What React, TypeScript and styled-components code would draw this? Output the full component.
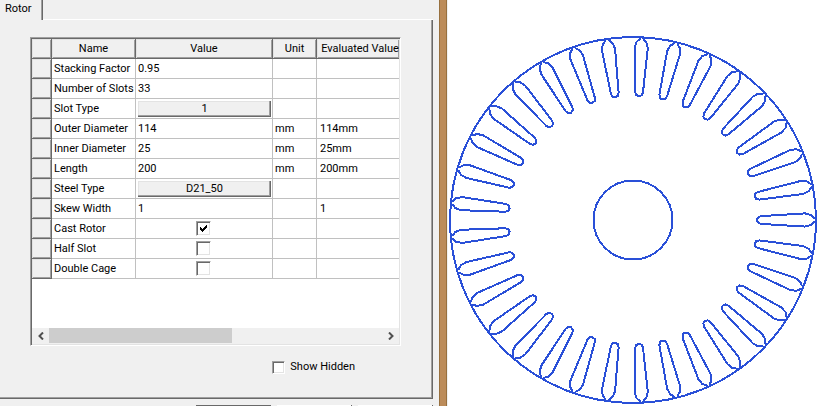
import React from "react";
import styled, { createGlobalStyle, css } from "styled-components";

const GlobalStyle = createGlobalStyle`
  *, *::before, *::after { box-sizing: border-box; }
  body {
    margin: 0;
    background: #f0f0f0;
    color: #000;
    font-family: "Roboto", "Liberation Sans", Arial, sans-serif;
    font-size: 11px;
    line-height: 16px;
  }
  button, input { font: inherit; color: inherit; margin: 0; }
`;

const sunken = css`
  border-style: solid;
  border-width: 1px;
  border-color: #a0a0a0 #fff #fff #a0a0a0;
  box-shadow: inset 1px 1px 0 #696969, inset -1px -1px 0 #e3e3e3;
`;

const Page = styled.main`
  display: grid;
  grid-template-columns: minmax(0, 439fr) 8px minmax(0, 385fr);
  min-height: 100vh;
`;

const Properties = styled.section`
  display: flex;
  flex-direction: column;
  padding-right: 6px;
`;

const TabList = styled.div`
  display: flex;
  height: 20px;
`;

const Tab = styled.button`
  width: 43px;
  height: 20px;
  padding: 0 0 2px 5px;
  border: 0;
  border-right: 1px solid #696969;
  box-shadow: inset -1px 0 0 #a0a0a0;
  background: #f0f0f0;
  text-align: left;
`;

const TabRest = styled.div`
  flex: 1;
  border-bottom: 1px solid #fff;
`;

const Pane = styled.div`
  flex: 1;
  display: flex;
  flex-direction: column;
  padding: 17px 31px 23px 30px;
  border-right: 1px solid #696969;
  border-bottom: 1px solid #696969;
  box-shadow: inset -1px -1px 0 #a0a0a0;
`;

const GridFrame = styled.div`
  ${sunken}
  flex: 1;
  display: flex;
  flex-direction: column;
  padding: 1px 1px 2px;
`;

const TableArea = styled.div`
  flex: 1;
  background: #fff;
  overflow: hidden;
`;

const Table = styled.table`
  width: 100%;
  table-layout: fixed;
  border-collapse: separate;
  border-spacing: 0;
`;

const Col = styled.col<{ $width?: number }>`
  width: ${(p) => (p.$width ? `${p.$width}px` : "auto")};
`;

const headFace = css`
  background: #f0f0f0;
  border-right: 1px solid #696969;
  border-bottom: 1px solid #696969;
  box-shadow: inset 1px 1px 0 #e3e3e3, inset -1px -1px 0 #a0a0a0;
`;

const HeadCell = styled.th`
  ${headFace}
  height: 20px;
  padding: 0;
  font-weight: normal;
  white-space: nowrap;
  &:last-child { border-right: 0; padding-left: 4px; }
`;

const RowHandle = styled.td`
  ${headFace}
  height: 20px;
  padding: 0;
`;

const cellRightPadding = { text: 2, button: 1, check: 3 };

const Cell = styled.td<{ $kind?: "text" | "button" | "check" }>`
  height: 20px;
  padding: 0 ${(p) => cellRightPadding[p.$kind ?? "text"]}px 0 2px;
  border-right: 1px solid #c0c0c0;
  border-bottom: 1px solid #c0c0c0;
  white-space: nowrap;
  &:last-child { border-right: 0; padding-left: 3px; }
`;

const ValueButton = styled.button`
  display: block;
  width: 100%;
  height: 16px;
  padding: 0;
  border: 0;
  background: #f0f0f0;
  box-shadow: inset -1px -1px 0 #696969, inset -2px -2px 0 #a0a0a0, inset 1px 1px 0 #e3e3e3;
  line-height: 14px;
`;

const CheckWrap = styled.span<{ $size: number }>`
  position: relative;
  display: block;
  width: ${(p) => p.$size}px;
  height: ${(p) => p.$size}px;
  margin: 0 auto;
`;

const CheckInput = styled.input`
  ${sunken}
  appearance: none;
  display: block;
  width: 100%;
  height: 100%;
  background: #fff;
`;

const CheckMark = styled.svg`
  position: absolute;
  inset: 0;
  margin: auto;
  pointer-events: none;
  display: none;
  input:checked + & { display: block; }
`;

const ScrollBar = styled.div`
  display: flex;
  height: 15px;
  background: #f0f0f0;
`;

const ScrollArrow = styled.button`
  display: flex;
  align-items: center;
  justify-content: center;
  width: 17px;
  padding: 0;
  border: 0;
  background: #f0f0f0;
`;

const ScrollTrack = styled.div`
  flex: 1;
`;

const ScrollThumb = styled.div`
  width: 55%;
  height: 100%;
  background: #cdcdcd;
`;

const HiddenOption = styled.label`
  align-self: flex-end;
  display: flex;
  align-items: center;
  gap: 5px;
  margin-top: 13px;
  margin-right: 46px;
`;

const Footer = styled.div`
  display: flex;
  align-items: flex-end;
  justify-content: flex-end;
  gap: 6px;
  height: 7px;
  overflow: hidden;
`;

const FooterEdge = styled.div<{ $active?: boolean }>`
  width: 75px;
  height: 1px;
  background: ${(p) => (p.$active ? "#696969" : "#fff")};
  border-right: 1px solid #696969;
`;

const Splitter = styled.div`
  background: #bc8c5a;
  border: solid #97703f;
  border-width: 0 1px;
`;

const Drawing = styled.section`
  display: flex;
  background: #fff;
  border-left: 1px solid #f0f0f0;
`;

const RotorSvg = styled.svg`
  width: 100%;
  height: 100%;
  fill: none;
  stroke: #2a50d8;
  stroke-width: 2;
`;

type Row = {
  name: string;
  value?: string;
  kind?: "button" | "check";
  checked?: boolean;
  unit?: string;
  evaluated?: string;
};

const rows: Row[] = [
  { name: "Stacking Factor", value: "0.95" },
  { name: "Number of Slots", value: "33" },
  { name: "Slot Type", value: "1", kind: "button" },
  { name: "Outer Diameter", value: "114", unit: "mm", evaluated: "114mm" },
  { name: "Inner Diameter", value: "25", unit: "mm", evaluated: "25mm" },
  { name: "Length", value: "200", unit: "mm", evaluated: "200mm" },
  { name: "Steel Type", value: "D21_50", kind: "button" },
  { name: "Skew Width", value: "1", evaluated: "1" },
  { name: "Cast Rotor", kind: "check", checked: true },
  { name: "Half Slot", kind: "check" },
  { name: "Double Cage", kind: "check" },
];

const SLOT_COUNT = 33;
const SLOT_PATH =
  "M183 -1.5 L181 -2 L178 -5 L172 -6.6 L128 -3.9 L125 -2.6 L124 0 L125 2.6 L128 3.9 L172 6.6 L178 5 L181 2 L183 1.5";

function CheckBox({ size, label, checked }: { size: number; label?: string; checked?: boolean }) {
  return (
    <CheckWrap $size={size}>
      <CheckInput type="checkbox" aria-label={label} defaultChecked={checked} />
      <CheckMark width="7" height="7" viewBox="0 0 7 7" shapeRendering="crispEdges">
        <path d="M0 2h1v1h1v1h1v-1h1v-1h1v-1h1v-1h1v3h-1v1h-1v1h-1v1h-1v1h-1v-1h-1v-1h-1z" fill="#000" />
      </CheckMark>
    </CheckWrap>
  );
}

function Chevron({ right }: { right?: boolean }) {
  return (
    <svg width="6" height="8" viewBox="0 0 6 8" fill="none" stroke="#505050" strokeWidth="2">
      <path d={right ? "M1 0.5 L4.5 4 L1 7.5" : "M5 0.5 L1.5 4 L5 7.5"} />
    </svg>
  );
}

function RowValue({ row }: { row: Row }) {
  if (row.kind === "button") return <ValueButton type="button">{row.value}</ValueButton>;
  if (row.kind === "check") return <CheckBox size={15} label={row.name} checked={row.checked} />;
  return <>{row.value}</>;
}

export default function App() {
  return (
    <>
      <GlobalStyle />
      <Page>
        <Properties>
          <TabList role="tablist">
            <Tab type="button" role="tab" aria-selected="true">Rotor</Tab>
            <TabRest />
          </TabList>
          <Pane role="tabpanel">
            <GridFrame>
              <TableArea>
                <Table>
                  <colgroup>
                    <Col $width={20} />
                    <Col $width={84} />
                    <Col $width={137} />
                    <Col $width={44} />
                    <Col />
                  </colgroup>
                  <thead>
                    <tr>
                      <HeadCell aria-label="Row" />
                      <HeadCell>Name</HeadCell>
                      <HeadCell>Value</HeadCell>
                      <HeadCell>Unit</HeadCell>
                      <HeadCell>Evaluated Value</HeadCell>
                    </tr>
                  </thead>
                  <tbody>
                    {rows.map((row) => (
                      <tr key={row.name}>
                        <RowHandle />
                        <Cell>{row.name}</Cell>
                        <Cell $kind={row.kind}>
                          <RowValue row={row} />
                        </Cell>
                        <Cell>{row.unit}</Cell>
                        <Cell>{row.evaluated}</Cell>
                      </tr>
                    ))}
                  </tbody>
                </Table>
              </TableArea>
              <ScrollBar>
                <ScrollArrow type="button" aria-label="Scroll left"><Chevron /></ScrollArrow>
                <ScrollTrack><ScrollThumb /></ScrollTrack>
                <ScrollArrow type="button" aria-label="Scroll right"><Chevron right /></ScrollArrow>
              </ScrollBar>
            </GridFrame>
            <HiddenOption>
              <CheckBox size={13} />
              Show Hidden
            </HiddenOption>
          </Pane>
          <Footer>
            <FooterEdge $active />
            <FooterEdge />
            <FooterEdge />
          </Footer>
        </Properties>
        <Splitter />
        <Drawing>
          <RotorSvg viewBox="0 0 384 406" role="img" aria-label="Rotor cross-section" shapeRendering="crispEdges">
            <g transform="translate(185 220)">
              <circle r="183" />
              <circle r="39.5" />
              {Array.from({ length: SLOT_COUNT }, (_, i) => (
                <path key={i} d={SLOT_PATH} transform={`rotate(${(i * 360) / SLOT_COUNT})`} />
              ))}
            </g>
          </RotorSvg>
        </Drawing>
      </Page>
    </>
  );
}
